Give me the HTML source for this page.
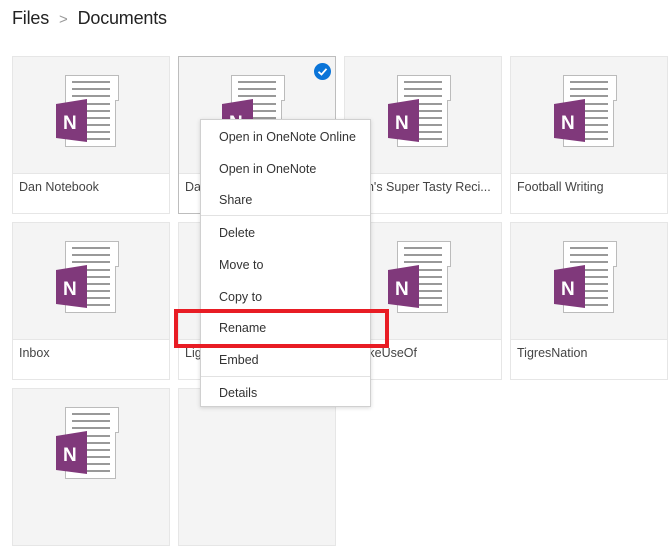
<!DOCTYPE html>
<html><head><style>
*{margin:0;padding:0;box-sizing:border-box}
body{width:670px;height:412px;overflow:hidden;background:#fff;font-family:"Liberation Sans",sans-serif;color:#333;position:relative}
.bc{position:absolute;top:8px;left:12px;font-size:18px;color:#222;letter-spacing:-0.2px}
.bc span.g{color:#999;margin:0 10px;font-size:15px}
.tile{position:absolute;width:158px;height:158px;background:#f4f4f4;border:1px solid #e6e6e6}
.tile.sel{border:1px solid #bdbdbd}
.cap{position:absolute;left:0;right:0;top:116px;bottom:0;background:#fff;border-top:1px solid #e6e6e6;font-size:12.5px;color:#444;padding:6px 6px;white-space:nowrap;overflow:hidden}
.ic{position:absolute;left:42px;top:18px}
.menu{position:absolute;left:200px;top:119px;width:171px;height:288px;background:#fff;border:1px solid #d0d0d0;box-shadow:0 1px 4px rgba(0,0,0,.15)}
.mi{position:absolute;left:18px;font-size:12.5px;color:#333}
.sep{position:absolute;left:0;right:0;height:1px;background:#e2e2e2}
.red{position:absolute;left:174px;top:309px;width:215px;height:39px;border:4px solid #e81c24}
.chk{position:absolute;left:314px;top:63px;width:17px;height:17px;border-radius:50%;background:#0a74d8}
</style></head><body>
<div class="bc">Files<span class="g">&gt;</span>Documents</div>

<svg width="0" height="0" style="position:absolute"><defs>
<g id="nb">
<path d="M10.5 0.5 H63.5 V25.5 H60.5 V71.5 H10.5 Z" fill="#fff" stroke="#bbb"/>
<g stroke="#999" stroke-width="2">
<line x1="17" y1="7" x2="55" y2="7"/><line x1="17" y1="14" x2="55" y2="14"/><line x1="17" y1="21" x2="55" y2="21"/><line x1="17" y1="29" x2="55" y2="29"/><line x1="17" y1="36" x2="55" y2="36"/><line x1="17" y1="43" x2="55" y2="43"/><line x1="17" y1="50" x2="55" y2="50"/><line x1="17" y1="57" x2="55" y2="57"/><line x1="17" y1="64" x2="55" y2="64"/></g>
<path d="M1 29 L32 24 L32 67 L1 63 Z" fill="#80397b"/>
<text x="8" y="54" font-family="Liberation Sans" font-weight="bold" font-size="19" fill="#fff">N</text>
</g></defs></svg>

<div class="tile" style="left:12px;top:56px"><svg class="ic" width="70" height="75"><use href="#nb"/></svg><div class="cap">Dan Notebook</div></div>
<div class="tile sel" style="left:178px;top:56px"><svg class="ic" width="70" height="75"><use href="#nb"/></svg><div class="cap">Dan</div></div>
<div class="tile" style="left:344px;top:56px"><svg class="ic" width="70" height="75"><use href="#nb"/></svg><div class="cap">Dan's Super Tasty Reci...</div></div>
<div class="tile" style="left:510px;top:56px"><svg class="ic" width="70" height="75"><use href="#nb"/></svg><div class="cap">Football Writing</div></div>

<div class="tile" style="left:12px;top:222px"><svg class="ic" width="70" height="75"><use href="#nb"/></svg><div class="cap">Inbox</div></div>
<div class="tile" style="left:178px;top:222px"><svg class="ic" width="70" height="75"><use href="#nb"/></svg><div class="cap">Light</div></div>
<div class="tile" style="left:344px;top:222px"><svg class="ic" width="70" height="75"><use href="#nb"/></svg><div class="cap">MakeUseOf</div></div>
<div class="tile" style="left:510px;top:222px"><svg class="ic" width="70" height="75"><use href="#nb"/></svg><div class="cap">TigresNation</div></div>

<div class="tile" style="left:12px;top:388px"><svg class="ic" width="70" height="75"><use href="#nb"/></svg></div>
<div class="tile" style="left:178px;top:388px"></div>

<div class="chk"><svg width="17" height="17"><path d="M4.5 8.8 L7.5 11.5 L12.5 5.8" fill="none" stroke="#fff" stroke-width="1.8"/></svg></div>

<div class="menu">
<div class="mi" style="top:10px">Open in OneNote Online</div>
<div class="mi" style="top:42px">Open in OneNote</div>
<div class="mi" style="top:73px">Share</div>
<div class="sep" style="top:95px"></div>
<div class="mi" style="top:106px">Delete</div>
<div class="mi" style="top:138px">Move to</div>
<div class="mi" style="top:170px">Copy to</div>
<div class="mi" style="top:201px">Rename</div>
<div class="mi" style="top:233px">Embed</div>
<div class="sep" style="top:256px"></div>
<div class="mi" style="top:266px">Details</div>
</div>
<div class="red"></div>
</body></html>
